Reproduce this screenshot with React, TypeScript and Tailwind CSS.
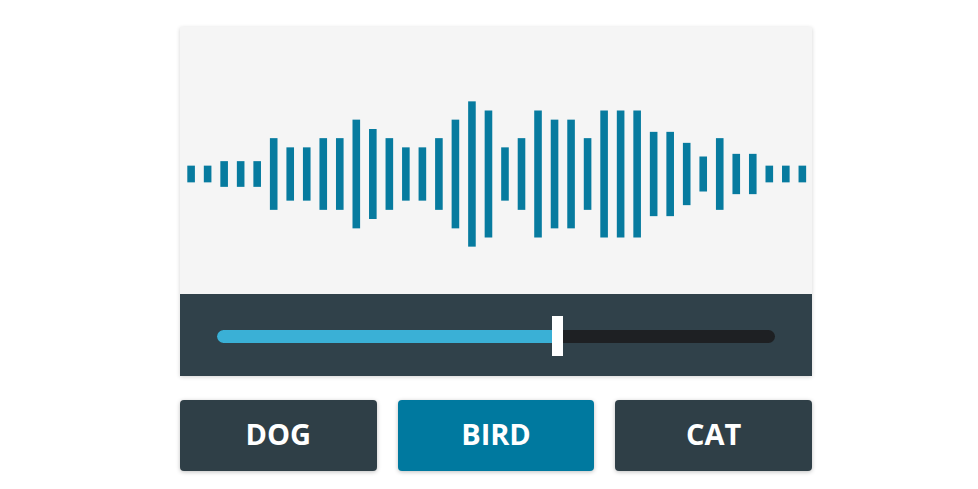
const bars = [
  16.7, 16.7, 25.7, 25.7, 25.7, 71.7, 53.3, 53.3, 71.7, 71.7, 108.7, 90, 71.7, 53.3, 53.3, 71.7,
  108.7, 145.3, 127, 53.3, 71.7, 127, 108.7, 108.7, 71.7, 127, 127, 127, 84.3, 84.3, 62.3, 35,
  71.7, 40.3, 40.3, 16.7, 16.7, 16.7,
]

function Waveform() {
  return (
    <svg width="632" height="267" viewBox="0 0 632 267" className="block">
      {bars.map((h, i) => (
        <rect key={i} x={7.3 + i * 16.52} y={147 - h / 2} width={7.6} height={h} fill="#077b9f" />
      ))}
    </svg>
  )
}

const buttons = [
  { label: 'DOG', active: false },
  { label: 'BIRD', active: true },
  { label: 'CAT', active: false },
]

export default function App() {
  return (
    <div className="h-[489px] w-[978px] bg-white pl-[180px] pt-[27px] font-['Open_Sans',sans-serif]">
      <div className="w-[632px]">
        <div className="shadow-[0_1px_4px_rgba(0,0,0,0.18)]">
          <div className="h-[267px] bg-[#f5f5f5]">
            <Waveform />
          </div>
          <div className="flex h-[82px] items-center bg-[#30414a] pl-[37px] pr-[37px]">
            <div className="relative mt-[2px] h-[13px] w-full rounded-full bg-[#1e2023]">
              <div className="h-full w-[337px] rounded-l-full bg-[#3ab0d6]" />
              <div className="absolute left-[335px] top-[-14px] h-[40px] w-[11px] bg-white" />
            </div>
          </div>
        </div>
        <div className="mt-[24px] grid grid-cols-3 gap-[21px]">
          {buttons.map(b => (
            <button
              key={b.label}
              className={
                b.active
                  ? 'flex h-[71px] items-center justify-center rounded-[4px] bg-[#00799f] pb-[4px] text-[29px] font-bold text-white shadow-[0_1px_4px_rgba(0,0,0,0.25)]'
                  : 'flex h-[71px] items-center justify-center rounded-[4px] bg-[#2f3f47] pb-[4px] text-[29px] font-bold text-white shadow-[0_1px_4px_rgba(0,0,0,0.25)]'
              }
            >
              {b.label}
            </button>
          ))}
        </div>
      </div>
    </div>
  )
}
